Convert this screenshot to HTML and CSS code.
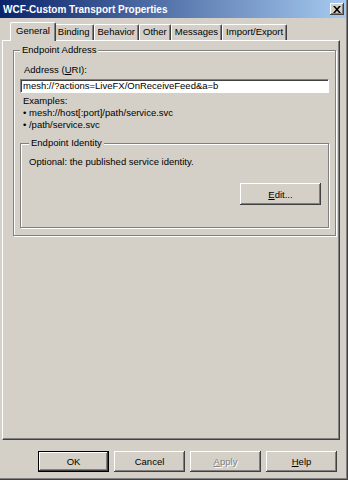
FILE: index.html
```html
<!DOCTYPE html>
<html lang="en">
<head>
    <meta charset="UTF-8">
    <title>WCF-Custom Transport Properties</title>
    <link rel="stylesheet" href="styles.css">
</head>
<body>
    <div class="window">
        <div class="titlebar">
            <span class="title">WCF-Custom Transport Properties</span>
            <span class="close">
                <svg width="8" height="7" viewBox="0 0 8 7">
                    <path d="M0 0h2l2 2.2L6 0h2L5 3.5 8 7H6L4 4.8 2 7H0l3-3.5z" fill="#000"/>
                </svg>
            </span>
        </div>

        <div class="tabs">
            <div class="tab active">General</div>
            <div class="tab">Binding</div>
            <div class="tab">Behavior</div>
            <div class="tab">Other</div>
            <div class="tab">Messages</div>
            <div class="tab">Import/Export</div>
        </div>

        <div class="panel">
            <fieldset class="group">
                <legend>Endpoint Address</legend>
                <div class="field-label">Address (<u>U</u>RI):</div>
                <div class="textbox">mesh://?actions=LiveFX/OnReceiveFeed&amp;a=b</div>
                <div class="examples">
                    Examples:<br>
                    &bull; mesh://host[:port]/path/service.svc<br>
                    &bull; /path/service.svc
                </div>

                <fieldset class="group inner">
                    <legend>Endpoint Identity</legend>
                    <p class="note">Optional: the published service identity.</p>
                    <div class="actions">
                        <button class="btn edit"><u>E</u>dit...</button>
                    </div>
                </fieldset>
            </fieldset>
        </div>

        <div class="footer">
            <button class="btn default">OK</button>
            <button class="btn">Cancel</button>
            <button class="btn disabled"><u>A</u>pply</button>
            <button class="btn"><u>H</u>elp</button>
        </div>
    </div>
</body>
</html>
```

FILE: styles.css
```css
body {
    margin: 0;
    background-color: #d4d0c8;
    font-family: "Liberation Sans", Arial, sans-serif;
    font-size: 9.5px;
    color: #000;
}

.window {
    width: 348px;
    height: 480px;
    box-sizing: border-box;
    padding: 0 2px 2px 0;
    display: flex;
    flex-direction: column;
    box-shadow: inset -1px -1px 0 #404040, inset -2px -2px 0 #808080;
}

.titlebar {
    height: 18px;
    display: flex;
    align-items: center;
    padding: 0 2px 0 3px;
    background: linear-gradient(to right, #0a246a, #a6caf0);
}

.title {
    color: #fff;
    font-weight: bold;
    font-size: 10px;
}

.close {
    margin-left: auto;
    width: 14px;
    height: 12px;
    box-sizing: border-box;
    display: flex;
    align-items: center;
    justify-content: center;
    background-color: #d4d0c8;
    box-shadow: inset -1px -1px 0 #404040, inset 1px 1px 0 #fff, inset -2px -2px 0 #808080;
}

/* tab strip */
.tabs {
    display: flex;
    align-items: flex-end;
    height: 22px;
    padding-left: 12px;
    position: relative;
    z-index: 1;
}

.tab {
    height: 15px;
    line-height: 14px;
    padding: 0 3px;
    border: 1px solid #fff;
    border-right-color: #404040;
    border-bottom: none;
    border-radius: 2px 2px 0 0;
    box-shadow: inset -1px 0 0 #808080;
}

.tab.active {
    height: 18px;
    line-height: 16px;
    margin: 0 -2px -1px;
    padding: 0 5px;
    background-color: #d4d0c8;
    position: relative;
}

/* tab page */
.panel {
    height: 400px;
    box-sizing: border-box;
    margin: 0 6px 0 2px;
    padding: 3px 3px 0 10px;
    border: 1px solid #fff;
    border-right-color: #404040;
    border-bottom-color: #404040;
    box-shadow: inset -1px -1px 0 #808080;
}

.group {
    margin: 0;
    padding: 8px 6px 7px;
    border: 1px solid #808080;
    box-shadow: inset 1px 1px 0 #fff, 1px 1px 0 #fff;
}

.group legend {
    padding: 0 2px;
    line-height: 12px;
    background-color: #d4d0c8;
}

.field-label {
    line-height: 12px;
    padding-left: 4px;
}

.textbox {
    margin-top: 3px;
    height: 14px;
    box-sizing: border-box;
    padding: 0 2px;
    line-height: 12px;
    background-color: #fff;
    border: 1px solid #808080;
    border-right-color: #fff;
    border-bottom-color: #fff;
    box-shadow: inset 1px 1px 0 #404040;
    white-space: nowrap;
    overflow: hidden;
}

.examples {
    margin-top: 2px;
    line-height: 12px;
    padding-left: 3px;
}

.group.inner {
    margin-top: 6px;
    padding: 7px 7px 22px 8px;
}

.note {
    margin: 0;
    line-height: 12px;
}

.actions {
    display: flex;
    justify-content: flex-end;
    margin-top: 15px;
}

.btn {
    width: 71px;
    height: 21px;
    padding: 0;
    font-family: inherit;
    font-size: 9.5px;
    color: #000;
    background-color: #d4d0c8;
    border: none;
    box-shadow: inset -1px -1px 0 #404040, inset 1px 1px 0 #fff, inset -2px -2px 0 #808080;
}

.btn.edit {
    width: 81px;
    height: 22px;
}

.btn.default {
    border: 1px solid #000;
}

.btn.disabled {
    color: #808080;
    text-shadow: 1px 1px 0 #fff;
}

.footer {
    display: flex;
    justify-content: flex-end;
    gap: 5px;
    padding: 11px 9px 0 0;
}
```
